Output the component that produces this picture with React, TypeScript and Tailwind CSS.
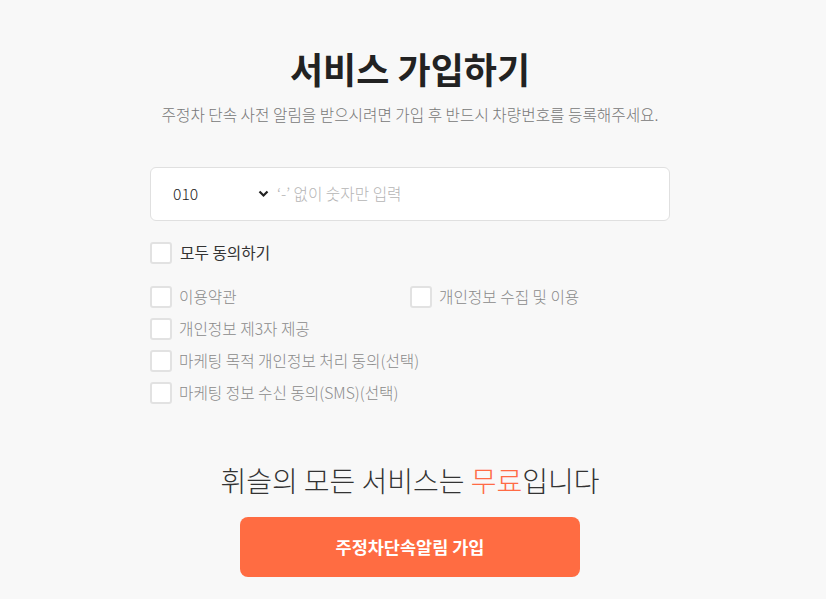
import React from "react";

const Box = ({ className = "" }: { className?: string }) => (
  <span className={`inline-block w-[22px] h-[22px] shrink-0 bg-white border-2 border-[#e2e2e2] rounded-[3px] ${className}`} />
);

const Item = ({ label }: { label: string }) => (
  <label className="flex items-center gap-[7px] h-[22px]">
    <Box />
    <span className="text-[15.7px] font-light text-[#8a8a8a] leading-none">{label}</span>
  </label>
);

export default function App() {
  return (
    <div
      className="w-[826px] h-[599px] bg-[#f8f8f8]"
      style={{ fontFamily: '"Noto Sans CJK KR", "Noto Sans", sans-serif' }}
    >
      <div className="w-[820px] flex flex-col items-center">
        <h1 className="mt-[41px] text-[36px] font-bold text-[#222] leading-[54px]">서비스 가입하기</h1>
        <p className="mt-[8px] text-[15.7px] font-light text-[#777] leading-[24px]">
          주정차 단속 사전 알림을 받으시려면 가입 후 반드시 차량번호를 등록해주세요.
        </p>

        <div className="mt-[40px] w-[520px] h-[54px] bg-white border border-[#e0e0e0] rounded-[6px] flex items-center">
          <div className="w-[126px] pl-[22px] pr-[8px] flex items-center justify-between">
            <span className="text-[15.7px] text-[#222] font-light">010</span>
            <svg width="11" height="8" viewBox="0 0 11 8">
              <path d="M1.5 1.5 L5.5 5.5 L9.5 1.5" stroke="#222" strokeWidth="2.2" fill="none" />
            </svg>
          </div>
          <span className="text-[15.7px] font-light text-[#b5b5b5]">‘-’ 없이 숫자만 입력</span>
        </div>

        <div className="w-[520px] mt-[21px]">
          <label className="flex items-center gap-[8px] h-[22px]">
            <Box />
            <span className="text-[15.7px] text-[#333] font-normal leading-none">모두 동의하기</span>
          </label>
          <div className="mt-[22px] flex flex-col gap-[10px]">
            <div className="grid grid-cols-[260px_260px]">
              <Item label="이용약관" />
              <Item label="개인정보 수집 및 이용" />
            </div>
            <Item label="개인정보 제3자 제공" />
            <Item label="마케팅 목적 개인정보 처리 동의(선택)" />
            <Item label="마케팅 정보 수신 동의(SMS)(선택)" />
          </div>
        </div>

        <p className="mt-[56px] text-[28px] font-light text-[#333] leading-[40px]">
          휘슬의 모든 서비스는 <span className="text-[#ff6b45]">무료</span>입니다
        </p>

        <button className="mt-[17px] w-[340px] h-[60px] rounded-[8px] bg-[#ff6c42] text-white text-[17.5px] font-bold">
          주정차단속알림 가입
        </button>
      </div>
    </div>
  );
}
